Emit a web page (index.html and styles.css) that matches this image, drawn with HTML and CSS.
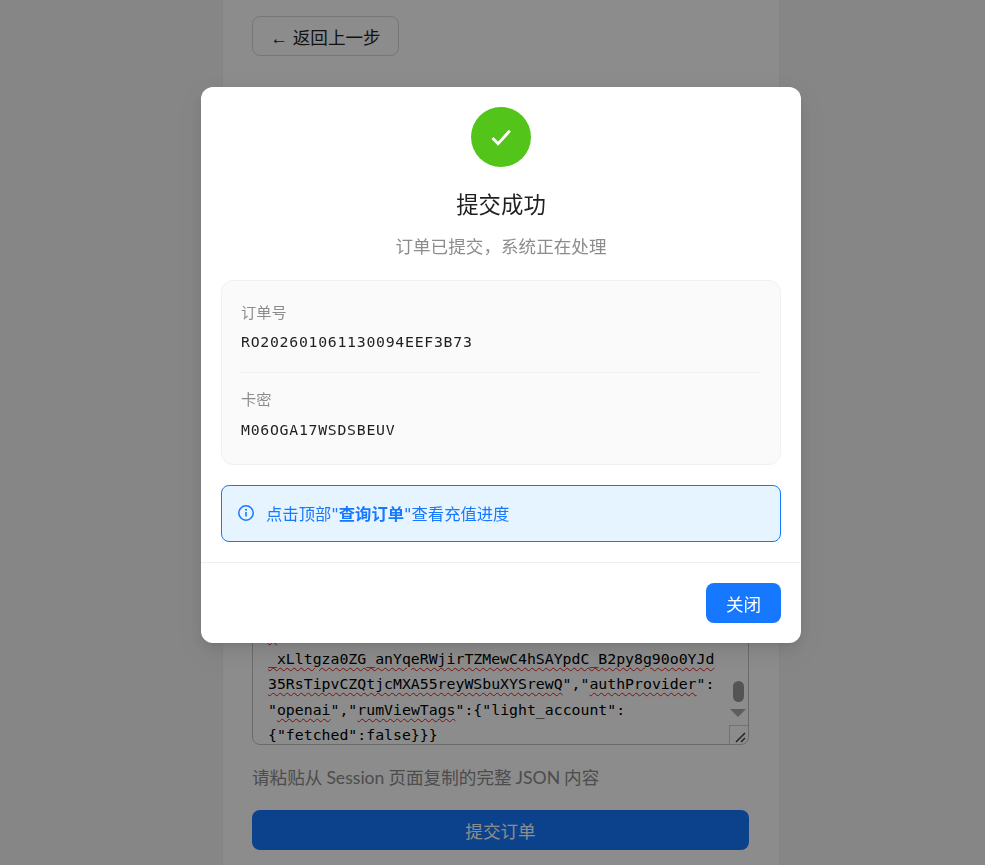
FILE: index.html
```html
<!DOCTYPE html>
<html lang="zh-CN">
<head>
<meta charset="utf-8">
<title>提交成功</title>
<link rel="stylesheet" href="styles.css">
</head>
<body>
<div class="stage">
  <main class="panel">
    <button class="back">← 返回上一步</button>
    <div class="field">
      <div class="textarea">
        <div class="code">
          <div class="line"><span class="err">e</span>yJhbGciOiJSUzI1NiIsImtpZCI6IjE5MzQ0ZTY1LWJiYzkt</div>
          <div class="line"><span class="err">_xLltgza0ZG_anYqeRWjirTZMewC4hSAYpdC_B2py8g90o0YJd</span></div>
          <div class="line"><span class="err">35RsTipvCZQtjcMXA55reyWSbuXYSrewQ</span>","<span class="err">authProvider</span>":</div>
          <div class="line">"<span class="err">openai</span>","<span class="err">rumViewTags</span>":{"light_account":</div>
          <div class="line">{"fetched":false}}}</div>
        </div>
        <div class="thumb"></div>
        <div class="arrow"></div>
        <div class="resizer">
          <svg viewBox="0 0 18 18" width="18" height="18"><path d="M6 16 15 7M11 16l4-4" stroke="#3f3f3f" stroke-width="1.5" fill="none"/></svg>
        </div>
      </div>
      <p class="hint">请粘贴从 Session 页面复制的完整 JSON 内容</p>
      <button class="submit">提交订单</button>
    </div>
  </main>
</div>
<div class="overlay">
  <section class="modal">
    <div class="modal-body">
      <div class="success">
        <svg viewBox="0 0 24 24" width="24" height="24"><path d="M3.5 13 9 18.8 20.8 5.8" stroke="#fff" stroke-width="2.8" fill="none"/></svg>
      </div>
      <h2 class="title">提交成功</h2>
      <p class="sub">订单已提交，系统正在处理</p>
      <div class="info">
        <div class="info-row">
          <div class="label">订单号</div>
          <div class="value">RO202601061130094EEF3B73</div>
        </div>
        <div class="info-row second">
          <div class="label">卡密</div>
          <div class="value">M06OGA17WSDSBEUV</div>
        </div>
      </div>
      <div class="alert">
        <svg class="alert-icon" viewBox="0 0 16 16" width="16" height="16"><circle cx="8" cy="8" r="7.2" stroke="#1677ff" stroke-width="1.5" fill="none"/><circle cx="8" cy="4.8" r="1" fill="#1677ff"/><path d="M8 7v4.6" stroke="#1677ff" stroke-width="1.6"/></svg>
        <span>点击顶部"<b>查询订单</b>"查看充值进度</span>
      </div>
    </div>
    <div class="modal-foot">
      <button class="close">关闭</button>
    </div>
  </section>
</div>
</body>
</html>
```

FILE: styles.css
```css
html, body {
  margin: 0;
  height: 865px;
  overflow: hidden;
  background: #f5f5f5;
  font-family: Lato, "Noto Sans CJK SC", sans-serif;
}
.stage {
  width: 1002px;
  display: flex;
  justify-content: center;
}
.panel {
  box-sizing: border-box;
  width: 558px;
  min-height: 900px;
  padding: 16px 29px;
  background: #fff;
  border: 1px solid #f0f0f0;
  border-width: 0 1px;
}
.back {
  display: block;
  box-sizing: border-box;
  width: 147px;
  height: 40px;
  padding: 0;
  background: #fff;
  border: 1px solid #d9d9d9;
  border-radius: 8px;
  color: #1f1f1f;
  font: 17.6px "Liberation Sans", "Noto Sans CJK SC", sans-serif;
}
.field {
  margin-top: 543px;
  width: 497px;
}
.textarea {
  position: relative;
  box-sizing: border-box;
  height: 146px;
  border: 1px solid #c4c4c4;
  border-radius: 8px;
  overflow: hidden;
  background: #fff;
}
.code {
  padding: 2px 15px;
  margin-top: 18px;
  font: 14.83px/25.6px "DejaVu Sans Mono", monospace;
  color: #000;
  white-space: nowrap;
}
.err {
  text-decoration: underline wavy #e02020 1px;
  text-underline-offset: 3px;
}
.thumb {
  position: absolute;
  right: 4px;
  top: 81px;
  width: 11px;
  height: 21px;
  border-radius: 6px;
  background: #999;
}
.arrow {
  position: absolute;
  right: 2px;
  top: 109px;
  width: 0;
  height: 0;
  border: 8px solid transparent;
  border-top: 8px solid #aaa;
  border-bottom: 0;
}
.resizer {
  position: absolute;
  right: 0;
  bottom: 0;
  width: 18px;
  height: 18px;
  border-left: 1px solid #d0d0d0;
  border-top: 1px solid #d0d0d0;
}
.resizer svg {
  display: block;
}
.hint {
  margin: 20px 0 19px;
  font-size: 17.6px;
  line-height: 26px;
  word-spacing: -.5px;
  color: #8c8c8c;
}
.submit {
  display: block;
  width: 100%;
  height: 40px;
  border: 0;
  border-radius: 8px;
  background: #1677ff;
  color: #fff;
  font: 17.6px "Noto Sans CJK SC", sans-serif;
}
.overlay {
  position: fixed;
  left: 0;
  top: 0;
  width: 1002px;
  height: 865px;
  background: rgba(0, 0, 0, .45);
  display: flex;
  justify-content: center;
  align-items: flex-start;
}
.modal {
  width: 600px;
  margin-top: 87px;
  background: #fff;
  border-radius: 12px;
  box-shadow: 0 6px 16px rgba(0, 0, 0, .08), 0 3px 6px -4px rgba(0, 0, 0, .12), 0 9px 28px 8px rgba(0, 0, 0, .05);
}
.modal-body {
  padding: 20px 20px;
  display: flex;
  flex-direction: column;
  align-items: stretch;
  border-bottom: 1px solid #f0f0f0;
}
.success {
  align-self: center;
  width: 60px;
  height: 60px;
  border-radius: 50%;
  background: #52c41a;
  display: flex;
  align-items: center;
  justify-content: center;
}
.title {
  margin: 18px 0 0;
  font: 400 22.4px/36px "Noto Sans CJK SC", sans-serif;
  color: #1f1f1f;
  text-align: center;
}
.sub {
  margin: 9px 0 0;
  font: 17.6px/32px "Noto Sans CJK SC", sans-serif;
  color: #8c8c8c;
  text-align: center;
}
.info {
  margin-top: 18px;
  box-sizing: border-box;
  height: 185px;
  padding: 19px 19px 20px;
  background: #fafafa;
  border: 1px solid #f0f0f0;
  border-radius: 12px;
}
.info-row.second {
  margin-top: 18px;
  padding-top: 14px;
  border-top: 1px solid #f0f0f0;
}
.label {
  font: 15.2px/22px "Noto Sans CJK SC", sans-serif;
  color: #8c8c8c;
}
.value {
  margin-top: 7px;
  font: 14.83px/25px "DejaVu Sans Mono", monospace;
  letter-spacing: .72px;
  color: #1f1f1f;
}
.second .value {
  margin-top: 8px;
}
.alert {
  margin-top: 20px;
  box-sizing: border-box;
  height: 57px;
  padding: 0 16px 2px;
  display: flex;
  align-items: center;
  gap: 12px;
  background: #e6f4ff;
  border: 1px solid #1677ff;
  border-radius: 8px;
  color: #1677ff;
  font: 16.32px "DejaVu Sans", "Noto Sans CJK SC", sans-serif;
}
.alert b {
  font-weight: 700;
}
.alert-icon {
  flex: none;
}
.modal-foot {
  padding: 20px;
  display: flex;
  justify-content: flex-end;
}
.close {
  width: 75px;
  height: 40px;
  border: 0;
  border-radius: 8px;
  background: #1677ff;
  color: #fff;
  font: 17.6px "Noto Sans CJK SC", sans-serif;
}
```
